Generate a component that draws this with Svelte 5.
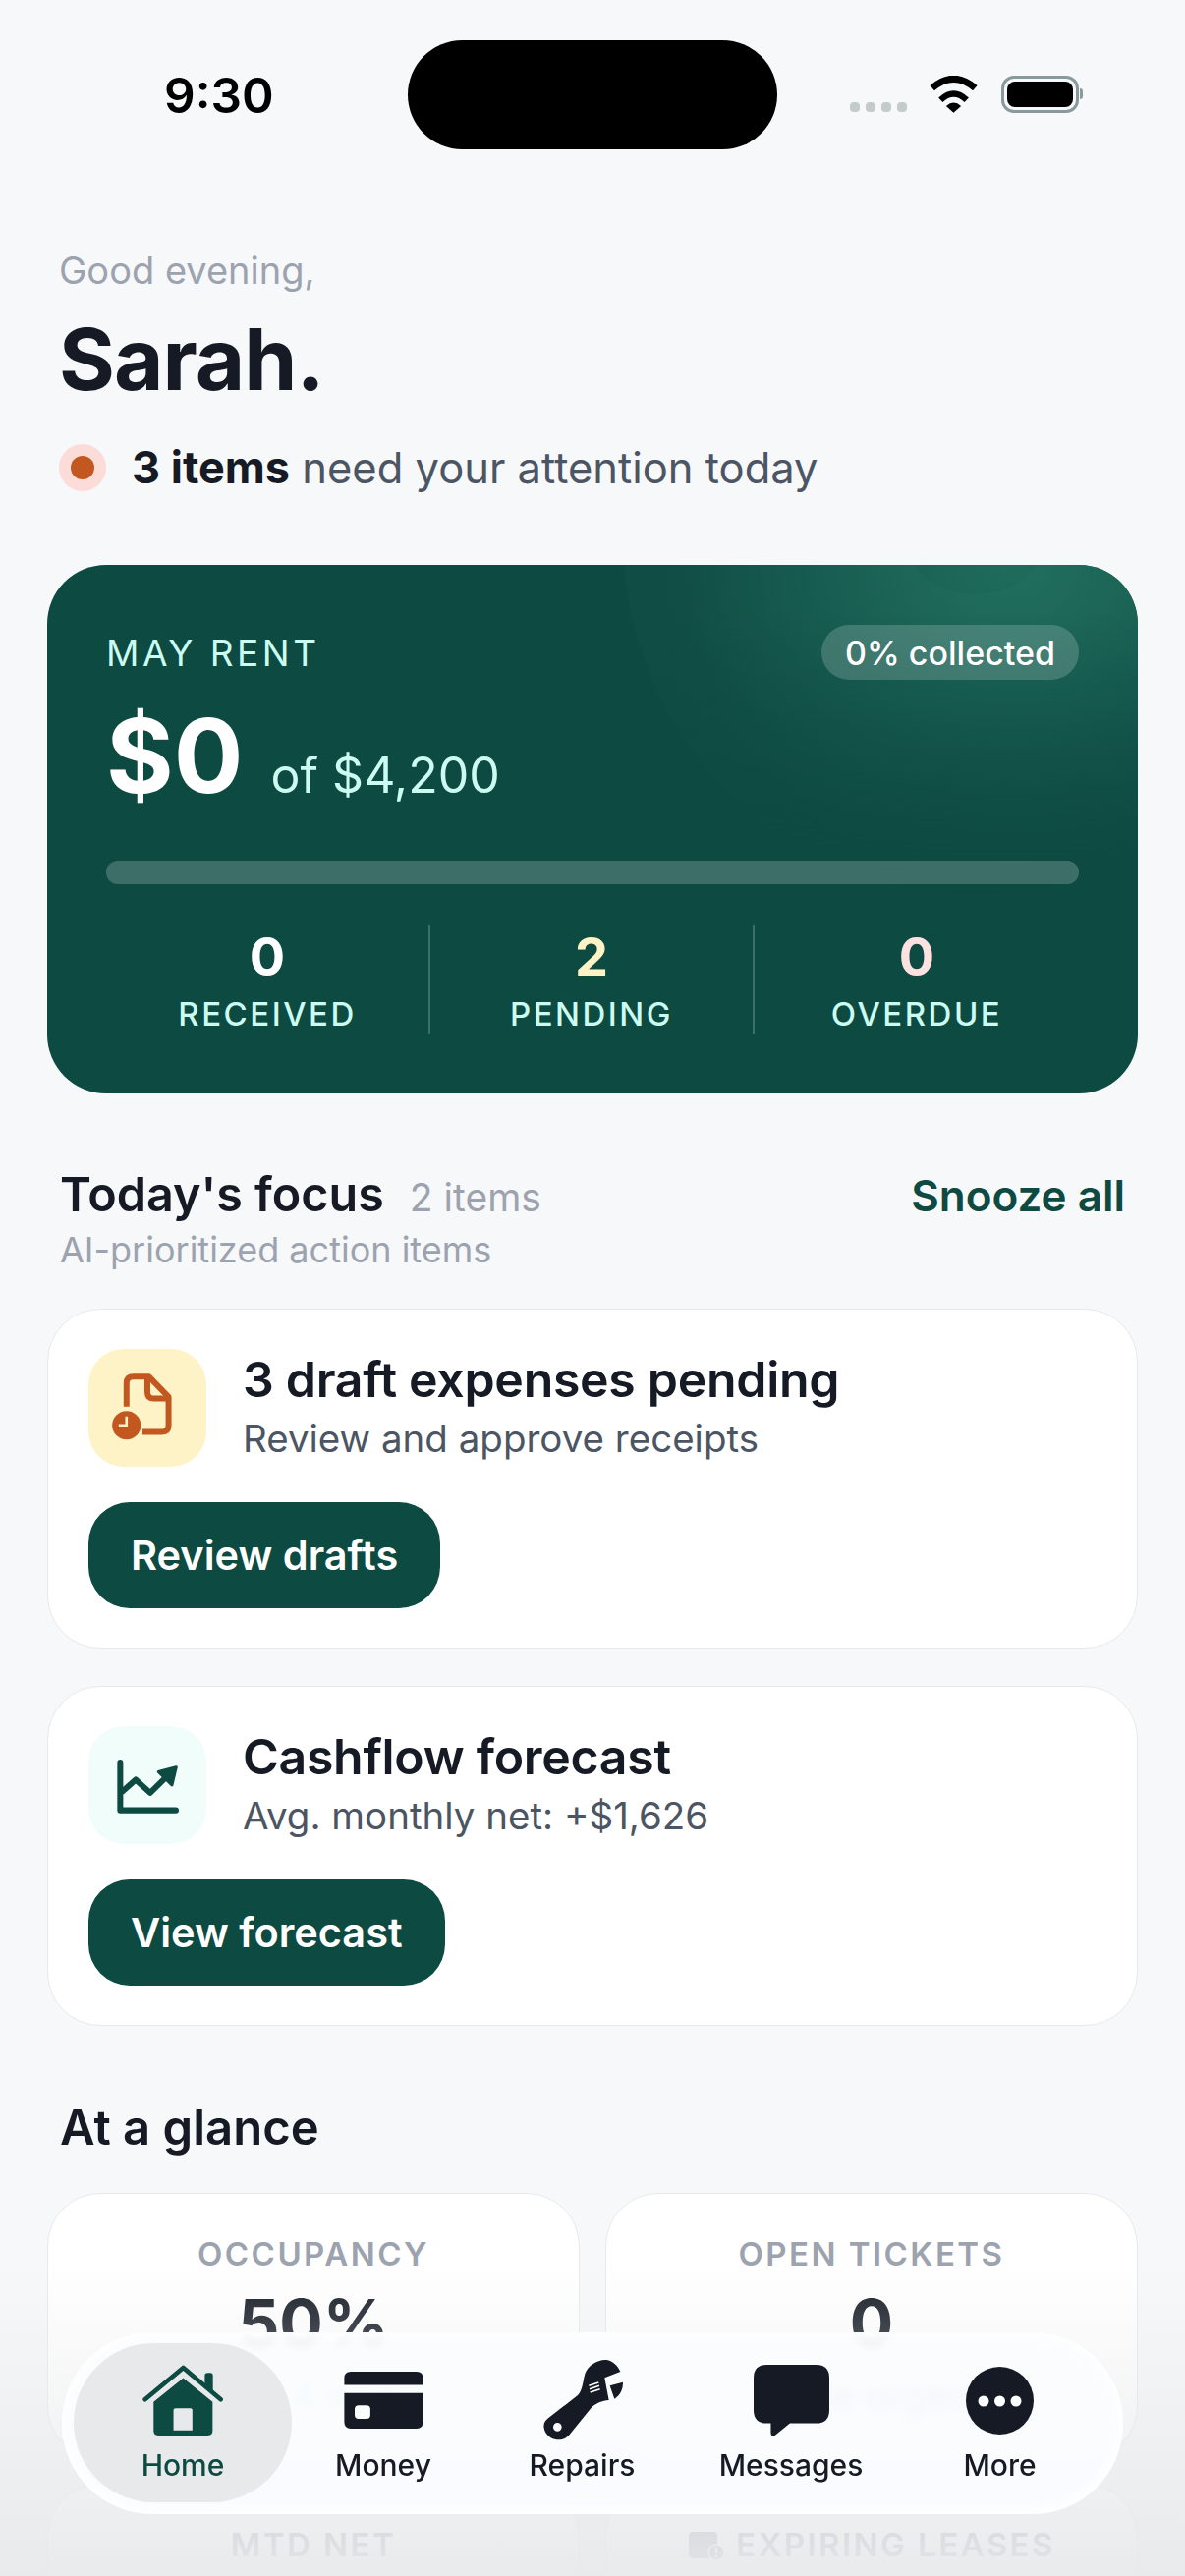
<script>
  const stats = [
    { value: '0', label: 'RECEIVED', tone: 'white' },
    { value: '2', label: 'PENDING', tone: 'amber' },
    { value: '0', label: 'OVERDUE', tone: 'rose' }
  ];
  const navItems = ['Home', 'Money', 'Repairs', 'Messages', 'More'];
</script>

<div class="screen">
  <header class="status">
    <span class="time">9:30</span>
    <div class="island"></div>
    <div class="indicators">
      <div class="dots"><i></i><i></i><i></i><i></i></div>
      <svg class="wifi" viewBox="315 85 155 115" width="52" height="38">
        <path d="M325 123Q391 67 457 123" fill="none" stroke="#000" stroke-width="21" />
        <path d="M351 160Q391 122 431 160" fill="none" stroke="#000" stroke-width="19" />
        <path d="M368 179Q391 158 414 179L391 199Z" fill="#000" />
      </svg>
      <div class="battery"><span></span></div>
    </div>
  </header>

  <section class="greeting">
    <p class="hello">Good evening,</p>
    <h1>Sarah.</h1>
    <div class="attention">
      <span class="pulse"><span></span></span>
      <p><strong>3 items</strong> need your attention today</p>
    </div>
  </section>

  <section class="rent">
    <div class="glow"></div>
    <div class="glow small"></div>
    <div class="rent-top">
      <span class="rent-label">MAY RENT</span>
      <span class="pill">0% collected</span>
    </div>
    <div class="amount">
      <span class="big">$0</span>
      <span class="of">of $4,200</span>
    </div>
    <div class="progress"></div>
    <div class="stats">
      {#each stats as s}
        <div class="stat">
          <span class="num {s.tone}">{s.value}</span>
          <span class="stat-label">{s.label}</span>
        </div>
      {/each}
    </div>
  </section>

  <div class="focus-head">
    <div class="focus-title">
      <h2>Today's focus</h2>
      <span class="count">2 items</span>
    </div>
    <span class="snooze">Snooze all</span>
  </div>
  <p class="focus-sub">AI-prioritized action items</p>

  <section class="card">
    <div class="card-row">
      <div class="tile amber-tile">
        <svg viewBox="120 110 240 220" width="80" height="73">
          <path d="M176 215V143Q176 123 196 123H245L305 185V272Q305 292 285 292H225" fill="none" stroke="#c2571f" stroke-width="18" stroke-linejoin="round" />
          <path d="M240 125V170Q240 190 260 190H305" fill="none" stroke="#c2571f" stroke-width="18" />
          <circle cx="176" cy="272" r="44" fill="#c2571f" />
          <path d="M176 245V272H152" fill="none" stroke="#fef3c7" stroke-width="8" />
        </svg>
      </div>
      <div>
        <h3>3 draft expenses pending</h3>
        <p class="card-sub">Review and approve receipts</p>
      </div>
    </div>
    <button class="action">Review drafts</button>
  </section>

  <section class="card second">
    <div class="card-row">
      <div class="tile mint-tile">
        <svg viewBox="140 145 200 170" width="67" height="57">
          <path d="M156 160V305H325" fill="none" stroke="#0d4a42" stroke-width="18" stroke-linecap="round" stroke-linejoin="round" />
          <path d="M160 250L203 212L247 252L300 200" fill="none" stroke="#0d4a42" stroke-width="18" stroke-linejoin="round" />
          <path d="M272 188L326 174L313 228Z" fill="#0d4a42" stroke="#0d4a42" stroke-width="9" stroke-linejoin="round" />
        </svg>
      </div>
      <div>
        <h3>Cashflow forecast</h3>
        <p class="card-sub">Avg. monthly net: +$1,626</p>
      </div>
    </div>
    <button class="action">View forecast</button>
  </section>

  <h2 class="glance-title">At a glance</h2>
  <div class="glance">
    <div class="tile-card">
      <span class="glance-label">OCCUPANCY</span>
      <span class="glance-value">50%</span>
      <span class="glance-sub mint">2 of 4 units</span>
    </div>
    <div class="tile-card">
      <span class="glance-label">OPEN TICKETS</span>
      <span class="glance-value">0</span>
      <span class="glance-sub">None urgent</span>
    </div>
    <div class="tile-card">
      <span class="glance-label">MTD NET</span>
    </div>
    <div class="tile-card">
      <span class="glance-label">
        <svg viewBox="0 0 37 32" width="37" height="32">
          <rect x="1" y="3" width="29" height="27" rx="4" fill="#9ca3af" />
          <circle cx="29" cy="24" r="8" fill="#9ca3af" stroke="#fff" stroke-width="1.5" />
          <path d="M29 19v6M29 27v2" stroke="#fff" stroke-width="2" />
        </svg>
        EXPIRING LEASES
      </span>
    </div>
  </div>

  <div class="fade"></div>

  <nav class="tabbar">
    {#each navItems as item, i}
      <div class="tab" class:active={i === 0}>
        <div class="tab-icon">
          {#if i === 0}
            <svg viewBox="250 115 250 220" width="83" height="73">
              <path d="M258 221L375 124L490 221" fill="none" stroke="#0d4a42" stroke-width="14" stroke-linecap="round" stroke-linejoin="round" />
              <path d="M441 180V148Q441 140 449 140H458Q466 140 466 148V200Z" fill="#0d4a42" />
              <path d="M284 229L375 156L465 229V318Q465 332 451 332H298Q284 332 284 318ZM345 316H403V254Q403 248 397 248H351Q345 248 345 254Z" fill="#0d4a42" fill-rule="evenodd" />
            </svg>
          {:else if i === 1}
            <svg viewBox="868 137 242 175" width="81" height="58">
              <path d="M868 178V157Q868 137 888 137H1090Q1110 137 1110 157V178Z" fill="#151a24" />
              <path d="M868 203H1110V292Q1110 312 1090 312H888Q868 312 868 292ZM912 240Q900 240 900 252V270Q900 282 912 282H936Q948 282 948 270V252Q948 240 936 240Z" fill="#151a24" fill-rule="evenodd" />
            </svg>
          {:else if i === 2}
            <svg viewBox="0 0 330 300" width="110" height="100">
              <path d="M60 205L150 135C165 120 165 95 172 70C180 45 210 25 238 27C258 30 272 45 280 63L232 82L245 150C225 152 205 158 190 175L125 255C105 280 65 275 50 245C42 225 48 215 60 205ZM88 219A13 13 0 1 0 88 245A13 13 0 1 0 88 219Z" fill="#151a24" fill-rule="evenodd" />
              <path d="M248 106L288 95C288 120 278 135 262 146Z" fill="#151a24" />
              <path d="M184 106L214 96M186 116L216 106M188 126L218 116" stroke="#fff" stroke-width="5" />
            </svg>
          {:else if i === 3}
            <svg viewBox="0 0 75 71" width="77" height="73">
              <path d="M13 0H62Q75 0 75 13V45Q75 58 62 58H36L21 70Q17 72 17 67V58H13Q0 58 0 45V13Q0 0 13 0Z" fill="#151a24" />
            </svg>
          {:else}
            <svg viewBox="0 0 69 69" width="69" height="69">
              <circle cx="34.500" cy="34.500" r="34.500" fill="#151a24" />
              <circle cx="18" cy="35" r="5.500" fill="#fff" />
              <circle cx="34.500" cy="35" r="5.500" fill="#fff" />
              <circle cx="51" cy="35" r="5.500" fill="#fff" />
            </svg>
          {/if}
        </div>
        <span class="tab-label">{item}</span>
      </div>
    {/each}
  </nav>
</div>

<style>
  :global(body) {
    margin: 0;
    background: #f7f8fa;
  }

  .screen {
    position: relative;
    height: 2622px;
    overflow: hidden;
    padding: 41px 48px 0;
    box-sizing: border-box;
    background: #f7f8fa;
    font-family: Inter, 'Noto Sans', sans-serif;
    color: #151a24;
  }

  p, h1, h2, h3 {
    margin: 0;
  }

  /* status bar */
  .status {
    display: flex;
    align-items: center;
    height: 111px;
    margin: 0 -48px;
  }

  .time {
    width: 415px;
    padding-left: 167px;
    box-sizing: border-box;
    font-size: 49.500px;
    font-weight: 600;
    color: #000;
  }

  .island {
    width: 376px;
    height: 111px;
    border-radius: 56px;
    background: #000;
  }

  .indicators {
    display: flex;
    align-items: flex-end;
    gap: 22px;
    margin-left: 74px;
    padding-bottom: 8px;
    margin-top: 6px;
  }

  .dots {
    display: flex;
    gap: 6px;
    padding-bottom: 1px;
  }

  .dots i {
    width: 10px;
    height: 10px;
    border-radius: 4px;
    background: #c5cbcb;
  }

  .wifi {
    display: block;
  }

  .battery {
    position: relative;
    width: 79px;
    height: 38px;
    padding: 3px;
    box-sizing: border-box;
    border: 3px solid #8a9a9c;
    border-radius: 13px;
  }

  .battery span {
    display: block;
    width: 100%;
    height: 100%;
    border-radius: 8px;
    background: #000;
  }

  .battery::after {
    content: '';
    position: absolute;
    right: -7px;
    top: 10px;
    width: 3px;
    height: 11px;
    border-radius: 0 3px 3px 0;
    background: #8a9a9c;
  }

  /* greeting */
  .greeting {
    padding: 99px 12px 0;
  }

  .hello {
    font-size: 38px;
    line-height: 48px;
    color: #9ca3af;
  }

  h1 {
    margin-top: 17px;
    font-size: 87px;
    line-height: 100px;
    font-weight: 700;
    letter-spacing: -1px;
  }

  .attention {
    display: flex;
    align-items: center;
    gap: 26px;
    margin-top: 36px;
    font-size: 43.500px;
    line-height: 48px;
    color: #4b5563;
  }

  .attention strong {
    font-size: 45px;
    font-weight: 700;
    color: #151a24;
  }

  .pulse {
    display: flex;
    align-items: center;
    justify-content: center;
    width: 48px;
    height: 48px;
    border-radius: 50%;
    background: #fbdcd8;
  }

  .pulse span {
    width: 24px;
    height: 24px;
    border-radius: 50%;
    background: #c2571f;
  }

  /* rent card */
  .rent {
    position: relative;
    overflow: hidden;
    margin-top: 75px;
    padding: 61px 60px;
    border-radius: 60px;
    background: #0d4a42;
  }

  .glow {
    position: absolute;
    left: 586px;
    top: -385px;
    width: 720px;
    height: 720px;
    border-radius: 50%;
    background: radial-gradient(circle at 55% 52%, #22705f 0%, rgba(30, 104, 90, 0.75) 30%, rgba(20, 82, 72, 0.6) 62%, rgba(15, 76, 67, 0.35) 100%);
    mask-image: linear-gradient(#000 60%, transparent 100%);
  }

  .glow.small {
    left: 880px;
    top: -60px;
    width: 130px;
    height: 90px;
    background: rgba(13, 74, 66, 0.08);
    mask-image: none;
  }

  .rent-top, .amount, .progress, .stats {
    position: relative;
  }

  .rent-top {
    display: flex;
    align-items: center;
    justify-content: space-between;
    height: 56px;
  }

  .rent-label {
    font-size: 37px;
    letter-spacing: 3.500px;
    color: #ccfbf1;
  }

  .pill {
    display: flex;
    align-items: center;
    height: 56px;
    padding: 0 24px;
    border-radius: 28px;
    background: rgba(255, 255, 255, 0.18);
    font-size: 34px;
    font-weight: 500;
    color: #fff;
  }

  .amount {
    display: flex;
    align-items: baseline;
    gap: 28px;
    margin-top: 23px;
  }

  .big {
    font-size: 105px;
    line-height: 108px;
    font-weight: 700;
    color: #fff;
  }

  .of {
    font-size: 50px;
    color: #ccfbf1;
  }

  .progress {
    height: 24px;
    margin-top: 53px;
    border-radius: 12px;
    background: rgba(255, 255, 255, 0.2);
  }

  .stats {
    display: grid;
    grid-template-columns: repeat(3, 1fr);
    margin-top: 42px;
  }

  .stat {
    display: flex;
    flex-direction: column;
    align-items: center;
    height: 110px;
    border-right: 2px solid rgba(255, 255, 255, 0.2);
  }

  .stat:last-child {
    border-right: none;
  }

  .num {
    margin-top: 1px;
    font-size: 54px;
    line-height: 62px;
    font-weight: 700;
  }

  .num.white { color: #fff; }
  .num.amber { color: #fef3c7; }
  .num.rose { color: #fee2e2; }

  .stat-label {
    margin-top: 7px;
    font-size: 33px;
    line-height: 40px;
    font-weight: 500;
    letter-spacing: 2.500px;
    color: #ccfbf1;
  }

  /* focus section */
  .focus-head {
    display: flex;
    align-items: baseline;
    justify-content: space-between;
    margin-top: 73px;
    padding: 0 13px;
  }

  .focus-title {
    display: flex;
    align-items: baseline;
    gap: 26px;
  }

  h2 {
    font-size: 48.500px;
    line-height: 60px;
    font-weight: 600;
  }

  .count {
    font-size: 39px;
    color: #9ca3af;
  }

  .snooze {
    font-size: 44px;
    font-weight: 600;
    color: #0d4a42;
  }

  .focus-sub {
    margin-top: 4px;
    padding: 0 13px;
    font-size: 36px;
    line-height: 44px;
    color: #9ca3af;
  }

  .card {
    margin-top: 38px;
    padding: 40px 40px 40px 41px;
    border: 1.500px solid #e8e9ec;
    border-radius: 54px;
    background: #fff;
  }

  .card.second {
    margin-top: 38px;
  }

  .card-row {
    display: flex;
    gap: 37px;
  }

  .tile {
    display: flex;
    flex: none;
    align-items: center;
    justify-content: center;
    width: 120px;
    height: 120px;
    border-radius: 36px;
  }

  .amber-tile { background: #fef3c7; }
  .mint-tile { background: #f0fdfa; }

  h3 {
    font-size: 50px;
    line-height: 62px;
    font-weight: 600;
    letter-spacing: -0.3px;
  }

  .card-sub {
    margin-top: 4px;
    font-size: 38.500px;
    line-height: 50px;
    color: #4b5563;
  }

  .action {
    display: block;
    height: 108px;
    margin-top: 36px;
    padding: 0 43px;
    border: none;
    border-radius: 42px;
    background: #0d4a42;
    font-family: inherit;
    font-size: 41.500px;
    font-weight: 600;
    color: #fff;
  }

  /* at a glance */
  .glance-title {
    margin-top: 73px;
    padding: 0 13px;
    font-size: 49px;
    line-height: 62px;
  }

  .glance {
    display: grid;
    grid-template-columns: 1fr 1fr;
    gap: 25px 26px;
    margin-top: 35px;
  }

  .tile-card {
    display: flex;
    flex-direction: column;
    align-items: center;
    height: 271px;
    padding-top: 41px;
    box-sizing: border-box;
    border: 1.500px solid #e8e9ec;
    border-radius: 54px;
    background: #fff;
  }

  .glance-label {
    display: flex;
    align-items: center;
    gap: 12px;
    font-size: 33px;
    line-height: 40px;
    font-weight: 600;
    letter-spacing: 2.450px;
    color: #9ca3af;
  }

  .glance-value {
    margin-top: 12px;
    font-size: 66px;
    line-height: 76px;
    font-weight: 700;
  }

  .glance-sub {
    margin-top: 12px;
    font-size: 39px;
    line-height: 48px;
    font-weight: 600;
    color: #4b5563;
  }

  .glance-sub.mint {
    color: #5eead4;
  }

  .fade {
    position: absolute;
    left: 0;
    right: 0;
    bottom: 0;
    height: 322px;
    background: linear-gradient(rgba(232, 233, 235, 0), rgba(232, 233, 235, 0.95));
  }

  /* floating tab bar */
  .tabbar {
    position: absolute;
    left: 63px;
    top: 2374px;
    width: 1080px;
    height: 185px;
    box-sizing: border-box;
    padding: 11px 12px;
    display: grid;
    grid-template-columns: 222px 186px 219px 206px 219px;
    border-radius: 93px;
    background: rgba(251, 252, 254, 0.94);
    backdrop-filter: blur(4px);
    box-shadow: inset 0 0 10px 4px #fff;
  }

  .tab {
    display: flex;
    flex-direction: column;
    align-items: center;
    height: 162px;
    border-radius: 81px;
  }

  .tab.active {
    background: #e8e9eb;
    color: #0d4a42;
  }

  .tab-icon {
    display: flex;
    align-items: center;
    justify-content: center;
    height: 100px;
    margin-top: 8px;
  }

  .tab-label {
    margin-top: -3px;
    font-size: 30px;
    line-height: 38px;
    font-weight: 500;
  }
</style>
